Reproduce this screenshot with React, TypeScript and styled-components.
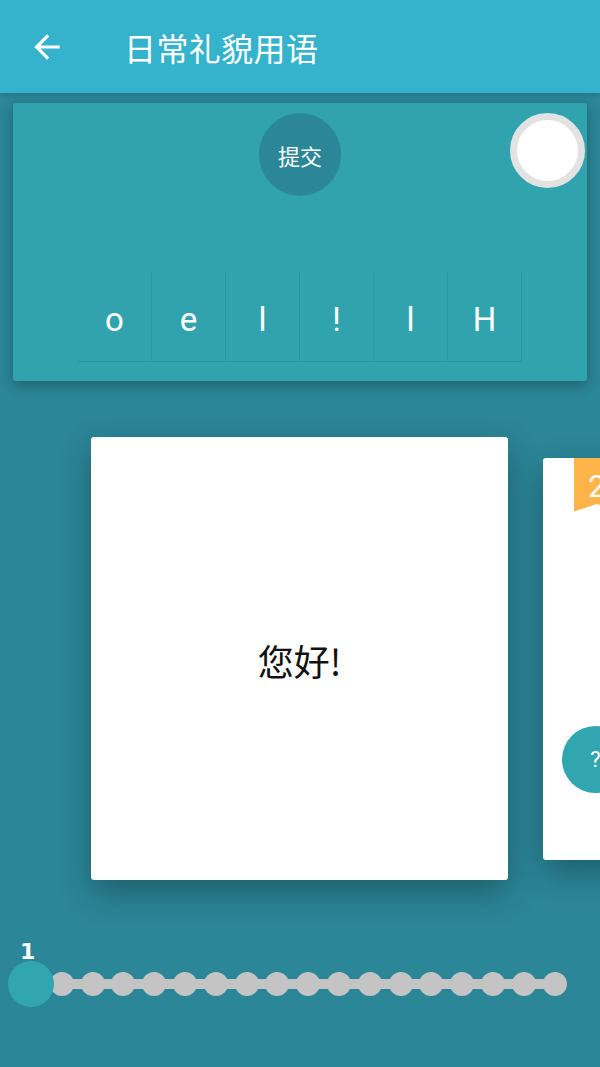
import React from "react";
import styled, { createGlobalStyle } from "styled-components";

const GlobalStyle = createGlobalStyle`
  html, body {
    margin: 0;
    padding: 0;
    background: #2b8698;
  }
  body {
    font-family: Roboto, "Noto Sans CJK SC", sans-serif;
  }
`;

const Page = styled.div`
  width: 600px;
  height: 1067px;
  overflow: hidden;
  display: flex;
  flex-direction: column;
  background: #2b8698;
`;

const Header = styled.header`
  height: 93px;
  flex: 0 0 93px;
  background: #36b3cc;
  display: flex;
  align-items: center;
  padding-left: 28px;
  box-sizing: border-box;
  box-shadow: 0 2px 4px rgba(0, 0, 0, 0.12);
  position: relative;
  z-index: 2;
`;

const BackButton = styled.button`
  border: none;
  background: none;
  padding: 0;
  width: 38px;
  height: 38px;
  display: flex;
  align-items: center;
  justify-content: center;
  color: #fff;
  cursor: pointer;
`;

const Title = styled.h1`
  margin: 0 0 0 58px;
  font-family: "Noto Sans CJK SC", sans-serif;
  font-size: 32px;
  font-weight: 400;
  color: #fff;
  letter-spacing: 0.4px;
`;

const Panel = styled.section`
  margin: 10px 13px 0;
  height: 278px;
  background: #30a3ae;
  border-radius: 3px;
  box-shadow: 0 4px 14px rgba(0, 0, 0, 0.28);
  display: flex;
  flex-direction: column;
  align-items: center;
  position: relative;
  box-sizing: border-box;
  padding-top: 10px;
`;

const SubmitButton = styled.button`
  width: 82px;
  height: 83px;
  border-radius: 50%;
  border: none;
  background: #2b8797;
  color: #fff;
  font-family: "Noto Sans CJK SC", sans-serif;
  font-size: 22px;
  padding: 0;
  cursor: pointer;
`;

const RecordButton = styled.button`
  position: absolute;
  top: 10px;
  right: 2px;
  width: 75px;
  height: 75px;
  border-radius: 50%;
  background: #fff;
  border: 7px solid #e2e2e2;
  box-sizing: border-box;
  padding: 0;
`;

const LetterRow = styled.div`
  margin-top: 76px;
  display: flex;
  border-bottom: 1px solid rgba(0, 0, 0, 0.08);
`;

const LetterCell = styled.div`
  width: 74px;
  height: 89px;
  box-sizing: border-box;
  border-right: 1px solid rgba(0, 0, 0, 0.08);
  display: flex;
  align-items: flex-end;
  justify-content: center;
  padding-bottom: 25px;
  color: #fff;
  font-family: Roboto, sans-serif;
  font-size: 33px;
  line-height: 1;
`;

const Carousel = styled.div`
  height: 443px;
  margin-top: 56px;
  display: flex;
  align-items: center;
  gap: 35px;
  padding-left: 91px;
`;

const Card = styled.div<{ $w: number; $h: number }>`
  flex: 0 0 ${({ $w }) => $w}px;
  height: ${({ $h }) => $h}px;
  background: #fff;
  border-radius: 3px;
  box-shadow: 0 12px 32px rgba(0, 0, 0, 0.3);
  display: flex;
  align-items: center;
  justify-content: center;
  position: relative;
`;

const CardWord = styled.div`
  font-family: "Noto Sans CJK SC", sans-serif;
  font-size: 36px;
  color: #111;
  margin-top: 2px;
`;

const Ribbon = styled.div`
  position: absolute;
  top: 0;
  left: 31px;
  width: 46px;
  height: 54px;
  background: #fdb54a;
  clip-path: polygon(0 0, 100% 0, 100% 100%, 50% 86%, 0 100%);
  color: #fff;
  font-family: Roboto, sans-serif;
  font-size: 31px;
  text-align: center;
  line-height: 58px;
`;

const HintButton = styled.button`
  position: absolute;
  left: 19px;
  top: 268px;
  width: 67px;
  height: 67px;
  border-radius: 50%;
  border: none;
  background: #31a5b0;
  color: #fff;
  font-family: Roboto, sans-serif;
  font-size: 22px;
  padding: 0;
`;

const Progress = styled.div`
  margin-top: 63px;
  display: flex;
  flex-direction: column;
`;

const ProgressLabel = styled.div`
  padding-left: 20px;
  height: 18px;
  font-family: "DejaVu Sans", sans-serif;
  font-weight: 700;
  font-size: 22px;
  line-height: 18px;
  color: #fff;
`;

const Track = styled.div`
  margin-left: 15.6px;
  width: 554.4px;
  height: 46px;
  display: flex;
  align-items: center;
  background: linear-gradient(#c4c4c4, #c4c4c4) no-repeat center / calc(100% - 30.8px) 10px;
`;

const Step = styled.div`
  flex: 0 0 30.8px;
  min-width: 0;
  display: flex;
  justify-content: center;
  align-items: center;
`;

const Dot = styled.div<{ $active?: boolean }>`
  flex: 0 0 ${({ $active }) => ($active ? 46 : 24)}px;
  height: ${({ $active }) => ($active ? 46 : 24)}px;
  border-radius: 50%;
  background: ${({ $active }) => ($active ? "#31a5b0" : "#c4c4c4")};
  position: relative;
  z-index: ${({ $active }) => ($active ? 1 : 0)};
`;

const letters = ["o", "e", "l", "!", "l", "H"];

export default function App() {
  return (
    <>
      <GlobalStyle />
      <Page>
        <Header>
          <BackButton aria-label="back">
            <svg width="38" height="38" viewBox="0 0 24 24" fill="currentColor">
              <path d="M20 11H7.83l5.59-5.59L12 4l-8 8 8 8 1.41-1.41L7.83 13H20v-2z" />
            </svg>
          </BackButton>
          <Title>日常礼貌用语</Title>
        </Header>

        <Panel>
          <SubmitButton>提交</SubmitButton>
          <RecordButton aria-label="record" />
          <LetterRow>
            {letters.map((l, i) => (
              <LetterCell key={i}>{l}</LetterCell>
            ))}
          </LetterRow>
        </Panel>

        <Carousel>
          <Card $w={417} $h={443}>
            <CardWord>您好!</CardWord>
          </Card>
          <Card $w={380} $h={402}>
            <Ribbon>2</Ribbon>
            <HintButton>?</HintButton>
          </Card>
        </Carousel>

        <Progress>
          <ProgressLabel>1</ProgressLabel>
          <Track>
            {Array.from({ length: 18 }).map((_, i) => (
              <Step key={i}>
                <Dot $active={i === 0} />
              </Step>
            ))}
          </Track>
        </Progress>
      </Page>
    </>
  );
}
